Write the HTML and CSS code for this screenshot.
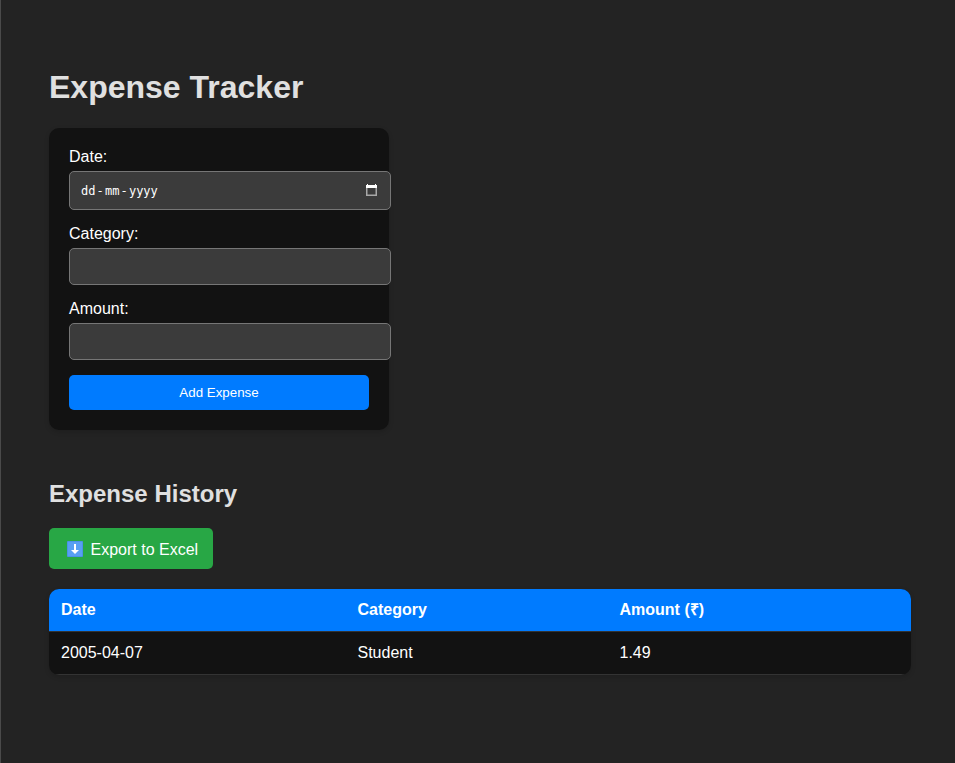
FILE: index.html
```html
<!DOCTYPE html>
<html lang="en">
<head>
<meta charset="utf-8">
<title>Expense Tracker</title>
<link rel="stylesheet" href="styles.css">
</head>
<body>
<main>
  <h1>Expense Tracker</h1>
  <form class="expense-form">
    <label for="date">Date:</label>
    <div class="field date-field" id="date" tabindex="0">
      <span class="date-text"><span>dd</span><span class="sep">-</span><span class="month">mm</span><span class="sep">-</span><span>yyyy</span></span>
      <svg class="calendar" width="11" height="12" viewBox="0 0 11 12">
        <path fill="#fff" d="M1 0h1v1h7V0h1v1h1v3H0V1h1z"/>
        <path fill="none" stroke="#a8a8a8" stroke-width="1.5" d="M.75 4v7.25h9.5V4"/>
      </svg>
    </div>
    <label for="category">Category:</label>
    <input class="field" id="category" type="text">
    <label for="amount">Amount:</label>
    <input class="field" id="amount" type="text">
    <button class="add" type="button">Add Expense</button>
  </form>
  <h2>Expense History</h2>
  <a class="export">
    <svg class="down" width="16" height="16" viewBox="0 0 16 16">
      <rect width="16" height="16" rx="1" fill="#4b91e8"/>
      <rect x="1" y="1" width="14" height="14" fill="#589ff3"/>
      <path fill="#fff" d="M7 3h2v6h3l-4 4-4-4h3z"/>
    </svg>
    <span>Export to Excel</span>
  </a>
  <table>
    <colgroup><col class="c-date"><col class="c-category"><col></colgroup>
    <thead><tr><th>Date</th><th>Category</th><th>Amount (₹)</th></tr></thead>
    <tbody><tr><td>2005-04-07</td><td>Student</td><td>1.49</td></tr></tbody>
  </table>
</main>
</body>
</html>
```
FILE: styles.css
```css
html {
  background: #232323;
}
body {
  margin: 0;
  min-height: 763px;
  box-sizing: border-box;
  border-left: 1px solid #4a4a4a;
  padding: 68px 44px 0 48px;
  font: 16px/18px "Liberation Sans", Arial, sans-serif;
  color: #fff;
}
h1, h2 {
  color: #e0e0e0;
  margin: 0;
}
h1 {
  font-size: 32px;
  line-height: 38px;
  margin-bottom: 22px;
}
h2 {
  font-size: 24px;
  line-height: 28px;
  margin: 50px 0 20px;
}
.expense-form {
  width: 300px;
  padding: 20px;
  border-radius: 10px;
  background: #121212;
  box-shadow: 0 2px 5px rgba(0, 0, 0, 0.15);
}
label {
  display: block;
  margin-bottom: 5px;
}
.field {
  display: block;
  box-sizing: border-box;
  width: 322px;
  height: 37px;
  margin: 0 0 15px;
  padding: 10px;
  border: 1px solid #767676;
  border-radius: 5px;
  background: #3b3b3b;
  color: #fff;
}
.date-field {
  display: flex;
  align-items: center;
  justify-content: space-between;
  height: 39px;
  padding: 0 13px 0 11px;
}
.date-text {
  display: flex;
  padding-top: 1px;
  font: 12px/15px "DejaVu Sans Mono", monospace;
}
.sep {
  width: 9.5px;
  text-align: center;
}
.calendar {
  display: block;
  margin-bottom: 2px;
}
.add {
  display: block;
  width: 100%;
  height: 35px;
  border: 0;
  border-radius: 5px;
  padding: 0;
  background: #007bff;
  color: #fff;
  font: 13.333px/15px "Liberation Sans", Arial, sans-serif;
}
.export {
  display: flex;
  align-items: center;
  box-sizing: border-box;
  width: 164px;
  height: 41px;
  padding: 2px 0 0 18px;
  border-radius: 5px;
  background: #28a745;
  white-space: nowrap;
}
.down {
  margin: 0 7.5px 1px 0;
}
table {
  width: 862px;
  margin-top: 20px;
  table-layout: fixed;
  border-spacing: 0;
  border-radius: 10px;
  overflow: hidden;
  background: #121212;
  box-shadow: 0 2px 5px rgba(0, 0, 0, 0.15);
}
.c-date {
  width: 296.5px;
}
.c-category {
  width: 262px;
}
th, td {
  box-sizing: border-box;
  height: 43px;
  padding: 12px;
  border-bottom: 1px solid #333;
  text-align: left;
}
th {
  background: #007bff;
  padding-top: 11px;
}
```
